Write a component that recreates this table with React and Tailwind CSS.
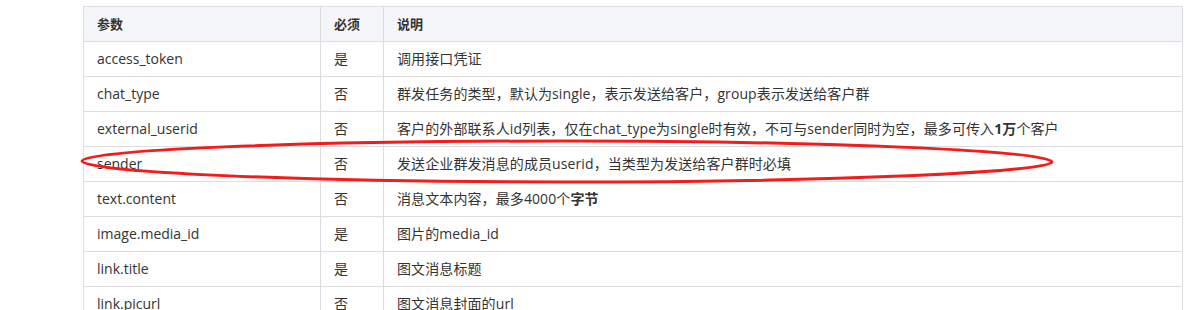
import React from "react";

const rows = [
  { name: "access_token", req: "是", desc: "调用接口凭证" },
  {
    name: "chat_type",
    req: "否",
    desc: "群发任务的类型，默认为single，表示发送给客户，group表示发送给客户群",
  },
  {
    name: "external_userid",
    req: "否",
    desc: (
      <>
        客户的外部联系人id列表，仅在chat_type为single时有效，不可与sender同时为空，最多可传入
        <b className="font-bold">1万</b>个客户
      </>
    ),
  },
  {
    name: "sender",
    req: "否",
    desc: "发送企业群发消息的成员userid，当类型为发送给客户群时必填",
  },
  {
    name: "text.content",
    req: "否",
    desc: (
      <>
        消息文本内容，最多4000个<b className="font-bold">字节</b>
      </>
    ),
  },
  { name: "image.media_id", req: "是", desc: "图片的media_id" },
  { name: "link.title", req: "是", desc: "图文消息标题" },
  { name: "link.picurl", req: "否", desc: "图文消息封面的url" },
];

const cell = "border border-[#dddddd] h-[35px] px-[13px] py-0 align-middle";

export default function App() {
  return (
    <div
      className="relative h-[310px] overflow-hidden bg-white pl-[83px] pt-[6px] text-[#333333]"
      style={{ fontFamily: '"Open Sans", "Noto Sans CJK SC", sans-serif' }}
    >
      <table className="w-[1100px] border-collapse text-[14px] leading-[20px]">
        <thead>
          <tr className="bg-[#f5f6fa]">
            <th className={`${cell} w-[237px] text-left text-[13px] font-bold`}>参数</th>
            <th className={`${cell} w-[63px] text-left text-[13px] font-bold`}>必须</th>
            <th className={`${cell} text-left text-[13px] font-bold`}>说明</th>
          </tr>
        </thead>
        <tbody>
          {rows.map((r) => (
            <tr key={r.name}>
              <td className={cell}>{r.name}</td>
              <td className={cell}>{r.req}</td>
              <td className={`${cell} tracking-[0.1px]`}>{r.desc}</td>
            </tr>
          ))}
        </tbody>
      </table>

      {/* red annotation around the sender row */}
      <svg
        className="pointer-events-none absolute left-0 top-0"
        width="1187"
        height="310"
        viewBox="0 0 1187 310"
      >
        <path
          d="M 82 161 C 82 150, 300 141, 565 141 C 830 141, 1052 151, 1052 162 C 1052 172, 830 182, 565 182 C 300 182, 82 172, 82 161 Z"
          fill="none"
          stroke="#f21c1c"
          strokeWidth="3"
        />
      </svg>
    </div>
  );
}
